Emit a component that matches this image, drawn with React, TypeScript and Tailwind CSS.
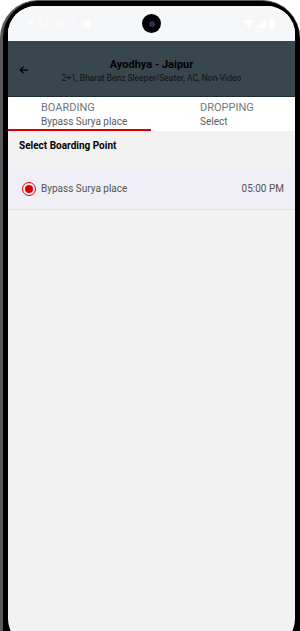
import React from 'react';

function StatusIcons() {
  return (
    <div className="flex items-center gap-[3px]">
      <svg width="11" height="9" viewBox="0 0 24 20">
        <path d="M12 19L0 5c7-6 17-6 24 0L12 19z" fill="#ffffff" />
      </svg>
      <svg width="9" height="9" viewBox="0 0 20 20">
        <path d="M20 0v20H0z" fill="#ffffff" />
      </svg>
      <svg width="6" height="10" viewBox="0 0 12 20">
        <rect x="0" y="2" width="12" height="18" rx="2" fill="#ffffff" />
        <rect x="3" y="0" width="6" height="3" fill="#ffffff" />
      </svg>
    </div>
  );
}

export default function App() {
  return (
    <div className="relative w-[300px] h-[631px] bg-white overflow-hidden" style={{ fontFamily: 'Roboto, "Liberation Sans", sans-serif' }}>
      {/* phone frame */}
      <div className="h-[660px] bg-black rounded-t-[38px] border-l-[3px] border-t-[1px] border-[#5a5a5a] pl-[5px] pr-[5px] pt-[5px]">
        <div className="h-[641px] bg-[#f2f2f2] rounded-t-[28px] rounded-b-[28px] overflow-hidden flex flex-col">
          {/* status bar */}
          <div className="h-[35px] bg-[#f6f7f9] flex items-center justify-between pl-[20px] pr-[20px] shrink-0">
            <div className="flex items-center gap-[6px] text-[11px] text-white">
              <span>4:12</span>
              <span className="text-[10px]">◷</span>
              <span className="text-[9px]">6</span>
              <span className="w-[8px] h-[8px] bg-white rounded-[2px] ml-[2px]"></span>
            </div>
            <StatusIcons />
          </div>

          {/* header */}
          <div className="h-[56px] bg-[#38464d] border-b-[1px] border-[#1d2d36] flex items-center relative shrink-0 pt-[4px]">
            <svg className="absolute left-[11px] top-[24px]" width="10" height="10" viewBox="0 0 24 24">
              <path d="M22 12H4M11 4l-8 8 8 8" stroke="#000" strokeWidth="3" fill="none" />
            </svg>
            <div className="flex-1 flex flex-col items-center">
              <div className="text-[11px] font-bold text-black leading-[15px]">Ayodhya - Jaipur</div>
              <div className="text-[8.5px] text-[#111] leading-[12px]">2+1, Bharat Benz Sleeper/Seater, AC, Non-Video</div>
            </div>
          </div>

          {/* tabs */}
          <div className="h-[34px] bg-white flex shrink-0">
            <div className="w-[143px] shrink-0 border-b-[2px] border-[#e00000] pl-[33px] pt-[4px]">
              <div className="text-[11px] text-[#72777c] leading-[14px]">BOARDING</div>
              <div className="text-[10px] text-[#5a5d61] leading-[14px]">Bypass Surya place</div>
            </div>
            <div className="flex-1 pl-[49px] pt-[4px]">
              <div className="text-[11px] text-[#72777c] leading-[14px]">DROPPING</div>
              <div className="text-[10px] text-[#5a5d61] leading-[14px]">Select</div>
            </div>
          </div>

          {/* content */}
          <div className="pl-[11px] pt-[9px] pb-[14px] text-[10px] font-bold text-black leading-[12px]">Select Boarding Point</div>

          <div className="h-[44px] bg-[#efeff5] border-b-[1px] border-[#e2e2e6] flex items-center pl-[14px] pr-[11px] pt-[2px]">
            <div className="w-[14px] h-[14px] rounded-full border-[1.5px] border-[#d80000] flex items-center justify-center">
              <div className="w-[8px] h-[8px] rounded-full bg-[#d80000]"></div>
            </div>
            <div className="ml-[5px] text-[10px] text-[#555] flex-1">Bypass Surya place</div>
            <div className="text-[10px] text-[#555]">05:00 PM</div>
          </div>
        </div>
      </div>

      {/* camera */}
      <div className="absolute left-[142px] top-[14px] w-[19px] h-[19px] rounded-full bg-black flex items-center justify-center">
        <div className="w-[6px] h-[6px] rounded-full bg-[#2a2f4a]"></div>
      </div>
    </div>
  );
}
